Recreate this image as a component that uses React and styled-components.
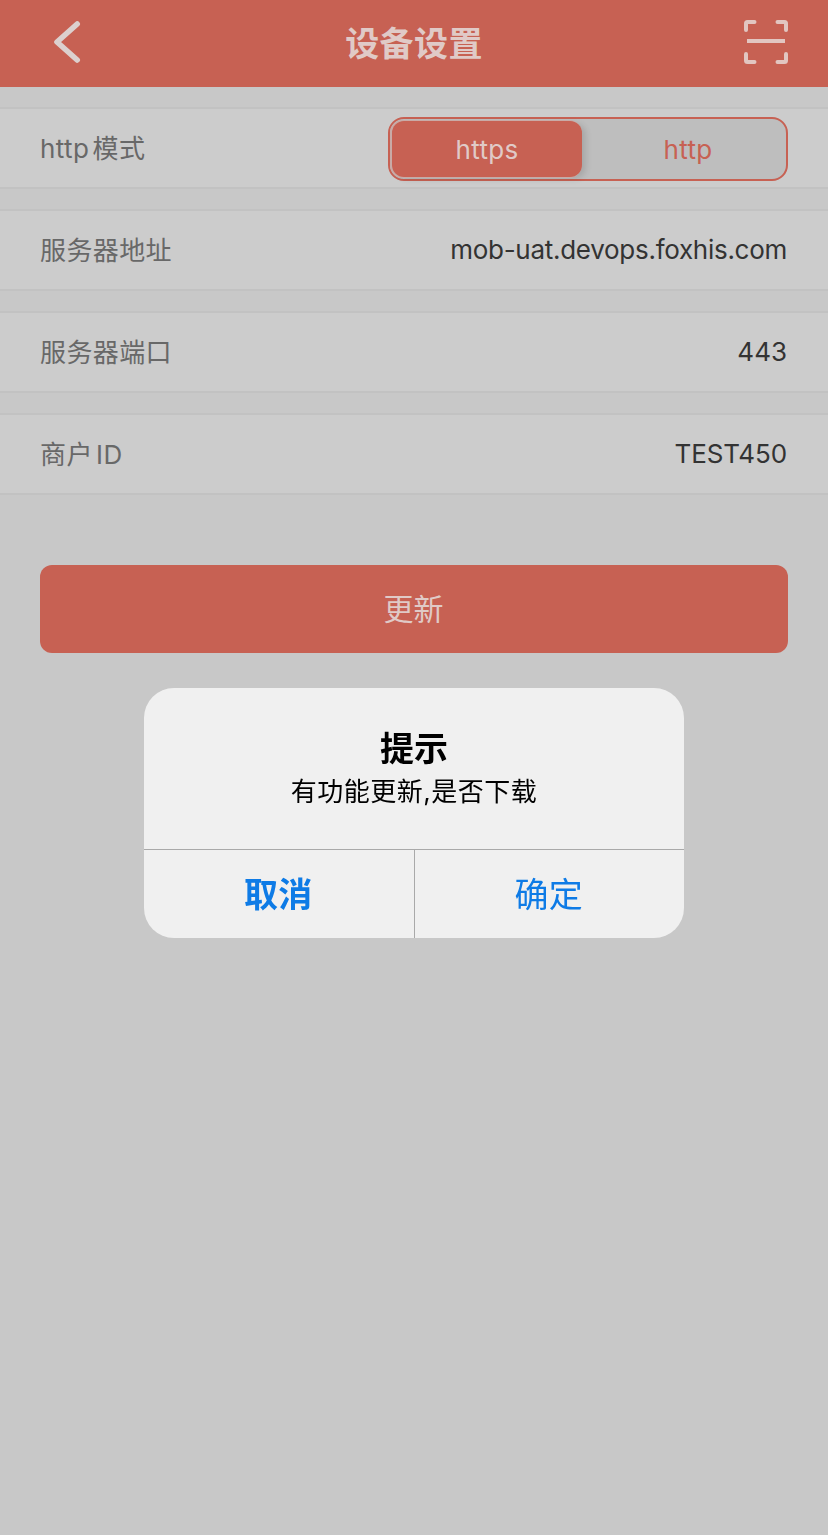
import { useState } from "react";
import styled, { createGlobalStyle, ThemeProvider } from "styled-components";

const theme = {
  colors: {
    primary: "#c76153",
    bg: "#c8c8c8",
    row: "#cccccc",
    line: "#c2c2c2",
    label: "#686868",
    text: "#333333",
    light: "#e0cac7",
    link: "#0e7be6",
  },
};

const rows = [
  { id: 1, label: "服务器地址", value: "mob-uat.devops.foxhis.com", spacing: "-0.28px" },
  { id: 2, label: "服务器端口", value: "443", spacing: "0" },
  { id: 3, label: "商户 ID", value: "TEST450", spacing: "-0.1px" },
];

function Header() {
  return (
    <HeaderBar>
      <IconButton aria-label="back">
        <svg width="28" height="44" viewBox="0 0 28 44" fill="none">
          <path d="M24.2 4L4 22L24.200 40" stroke="#dcd0ce" strokeWidth="5.6" strokeLinecap="round" strokeLinejoin="round" />
        </svg>
      </IconButton>
      <h1>设备设置</h1>
      <IconButton aria-label="scan">
        <svg width="44" height="44" viewBox="0 0 44 44" fill="none" stroke="#e2c6c1" strokeWidth="4" strokeLinecap="round" strokeLinejoin="round">
          <path d="M2 10V3.500Q2 2 3.500 2H10.500" />
          <path d="M33.500 2H40.500Q42 2 42 3.500V10" />
          <path d="M2 34V40.500Q2 42 3.500 42H10.500" />
          <path d="M33.500 42H40.500Q42 42 42 40.500V34" />
          <path d="M3 21H41" strokeLinecap="butt" />
        </svg>
      </IconButton>
    </HeaderBar>
  );
}

function App() {
  const [mode, setMode] = useState("https");

  return (
    <ThemeProvider theme={theme}>
      <GlobalStyle />
      <Page>
        <Header />
        <List>
          <Row>
            <Label>http 模式</Label>
            <Segment>
              {["https", "http"].map((name) => (
                <SegmentItem key={name} $active={mode === name} onClick={() => setMode(name)}>
                  {name}
                </SegmentItem>
              ))}
            </Segment>
          </Row>
          {rows.map(({ id, label, value, spacing }) => (
            <Row key={id}>
              <Label>{label}</Label>
              <Value $spacing={spacing}>{value}</Value>
            </Row>
          ))}
        </List>
        <UpdateButton>更新</UpdateButton>
      </Page>

      <Overlay>
        <Dialog role="dialog">
          <DialogBody>
            <h2>提示</h2>
            <p>有功能更新,是否下载</p>
          </DialogBody>
          <DialogActions>
            <DialogButton $bold>取消</DialogButton>
            <DialogButton>确定</DialogButton>
          </DialogActions>
        </Dialog>
      </Overlay>
    </ThemeProvider>
  );
}

const GlobalStyle = createGlobalStyle`
  * {
    box-sizing: border-box;
    margin: 0;
    padding: 0;
  }

  body {
    background-color: ${theme.colors.bg};
    font-family: Inter, "Noto Sans CJK SC", sans-serif;
  }

  button {
    border: 0;
    background: none;
    font-family: inherit;
    cursor: pointer;
  }
`;

const Page = styled.div`
  min-height: 100vh;
  background-color: ${({ theme }) => theme.colors.bg};
`;

const HeaderBar = styled.header`
  height: 87px;
  padding: 0 40px 3px 53px;
  display: flex;
  align-items: center;
  justify-content: space-between;
  background-color: ${({ theme }) => theme.colors.primary};

  h1 {
    margin-right: 13px;
    padding-top: 3px;
    font-size: 34px;
    line-height: 48px;
    font-weight: 600;
    letter-spacing: 0.4px;
    color: ${({ theme }) => theme.colors.light};
  }
`;

const IconButton = styled.button`
  width: 44px;
  height: 44px;
  display: flex;
`;

const List = styled.div`
  padding-top: 20px;
  display: flex;
  flex-direction: column;
  gap: 20px;
`;

const Row = styled.div`
  height: 82px;
  padding: 0 40px;
  display: flex;
  align-items: center;
  justify-content: space-between;
  border: solid ${({ theme }) => theme.colors.line};
  border-width: 2px 0;
  background-color: ${({ theme }) => theme.colors.row};
`;

const Label = styled.span`
  padding-top: 1px;
  font-size: 26px;
  line-height: 38px;
  letter-spacing: 0.4px;
  word-spacing: -4.5px;
  color: ${({ theme }) => theme.colors.label};
`;

const Value = styled.span`
  font-size: 26px;
  line-height: 38px;
  padding-right: 1px;
  letter-spacing: ${({ $spacing }) => $spacing};
  color: ${({ theme }) => theme.colors.text};
`;

const Segment = styled.div`
  width: 400px;
  height: 64px;
  margin-top: 2px;
  padding: 2px;
  display: flex;
  border: 2px solid ${({ theme }) => theme.colors.primary};
  border-radius: 16px;
  background-color: #bebebe;
`;

const SegmentItem = styled.button`
  flex: ${({ $active }) => ($active ? "0 0 190px" : "1")};
  height: 56px;
  padding-top: 1px;
  padding-left: ${({ $active }) => ($active ? "0" : "10px")};
  border-radius: 12px;
  font-size: 26px;
  line-height: 38px;
  letter-spacing: 0.3px;
  background-color: ${({ theme, $active }) => ($active ? theme.colors.primary : "transparent")};
  color: ${({ theme, $active }) => ($active ? theme.colors.light : theme.colors.primary)};
  box-shadow: ${({ $active }) => ($active ? "-1px 0 0 1px #c9aaa6, 4px 2px 6px rgba(0, 0, 0, 0.12)" : "none")};
`;

const UpdateButton = styled.button`
  width: 748px;
  height: 88px;
  margin: 70px 40px 0;
  padding: 0 1px 5px 0;
  border-radius: 12px;
  font-size: 30px;
  color: ${({ theme }) => theme.colors.light};
  background-color: ${({ theme }) => theme.colors.primary};
`;

const Overlay = styled.div`
  position: fixed;
  inset: 0;
  padding-top: 91px;
  display: flex;
  align-items: center;
  justify-content: center;
`;

const Dialog = styled.div`
  width: 540px;
  height: 250px;
  display: flex;
  flex-direction: column;
  border-radius: 30px;
  overflow: hidden;
  background-color: #f0f0f0;
`;

const DialogBody = styled.div`
  flex: 1;
  padding-top: 37px;
  text-align: center;
  color: #000;

  h2 {
    font-size: 34px;
    line-height: 48px;
    font-weight: 700;
  }

  p {
    font-size: 26px;
    line-height: 38px;
    letter-spacing: 0.5px;
  }
`;

const DialogActions = styled.div`
  height: 89px;
  display: flex;
  border-top: 1px solid #a9a9a9;
`;

const DialogButton = styled.button`
  flex: 1;
  padding: 0 1px 3px 0;
  font-size: 34px;
  font-weight: ${({ $bold }) => ($bold ? 700 : 400)};
  letter-spacing: 0.3px;
  color: ${({ theme }) => theme.colors.link};

  & + & {
    border-left: 1px solid #a9a9a9;
  }
`;

export default App;
